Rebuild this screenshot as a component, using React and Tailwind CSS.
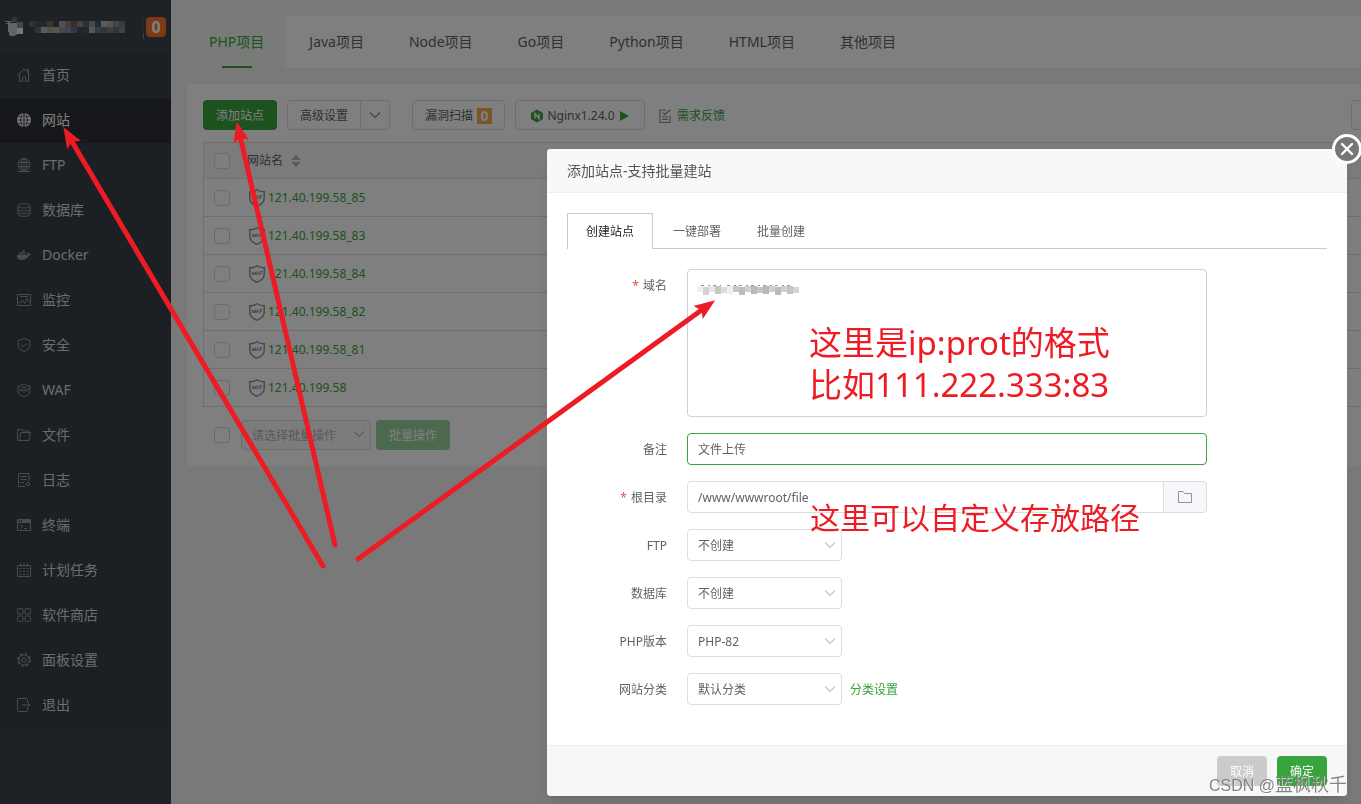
import React, { useState } from 'react';
import { FaDocker } from 'react-icons/fa';

const NavIcon = ({ children }) => (
  <svg width="14" height="14" viewBox="0 0 14 14" fill="none" stroke="currentColor" strokeWidth="1">
    {children}
  </svg>
);

const icons = {
  home: (
    <NavIcon>
      <path d="M.5 7.2 7 1l6.500 6.200M2.500 6v7.500H5.500V9h3v4.500h3V6M10 3.500V1.500h1.500V5" />
    </NavIcon>
  ),
  site: (
    <NavIcon>
      <circle cx="7" cy="7" r="6.500" fill="currentColor" />
      <g stroke="#2e2f36" strokeWidth="0.8">
        <path d="M7 .5v13M.5 7h13M1.500 3.800h11M1.500 10.200h11" />
        <ellipse cx="7" cy="7" rx="3.300" ry="6.500" />
      </g>
    </NavIcon>
  ),
  ftp: (
    <NavIcon>
      <circle cx="7" cy="6.500" r="6" />
      <ellipse cx="7" cy="6.500" rx="3" ry="6" />
      <path d="M1 4.500h12M7 .5v12M1 8.500h12M1 13.500h12" />
    </NavIcon>
  ),
  database: (
    <NavIcon>
      <ellipse cx="7" cy="2.800" rx="6" ry="2.200" />
      <path d="M1 3v8c0 1.400 2.700 2.500 6 2.500s6-1.100 6-2.500V3M1 5.600C1 7 3.700 8 7 8s6-1 6-2.400M1 8.400c0 1.400 2.700 2.400 6 2.400s6-1 6-2.400" />
    </NavIcon>
  ),
  docker: <FaDocker size={14} />,
  monitor: (
    <NavIcon>
      <path d="M.5 1.500h13v11H.5zM3 3.500h8M2 9.500h2L5.500 7l2 3.500L10 5.500l1.500 3H13" />
    </NavIcon>
  ),
  safe: (
    <NavIcon>
      <path d="M7 .7 12.800 2.500v4.300c0 3-2.300 5.300-5.800 6.600C3.500 12.100 1.200 9.800 1.200 6.800V2.500zM4.300 6.800l2 2 3.500-3.500" />
    </NavIcon>
  ),
  waf: (
    <NavIcon>
      <path d="M1.200 5V3L4 2.600 7 .8l3 1.800 2.800.4v2M1.200 9c.6 2.200 2.800 3.600 5.800 4.500 3-.9 5.200-2.300 5.800-4.500M1.200 4v6M12.800 4v6M4.500 4.200h5" />
      <path d="m3 6 .8 2.200L4.700 6l.9 2.200L6.400 6M6.800 8.500 7.800 6l1 2.500M9.800 8.500V6H11.500M9.800 7.200h1.400" strokeWidth="0.800" />
    </NavIcon>
  ),
  files: (
    <NavIcon>
      <path d="M2.500 12.500h9.500l1.500-8H3.800zM2.500 12.500h-2v-11h4l1.500 1.500h6v1.500" />
    </NavIcon>
  ),
  logs: (
    <NavIcon>
      <path d="M12 8V.5H1.500v13H8M3.500 3.500H10M3.500 6.500H10M3.500 9.500H7" />
      <circle cx="10.800" cy="11" r="1.700" />
    </NavIcon>
  ),
  terminal: (
    <NavIcon>
      <path d="M.5 1.500h13v11H.5zM.5 4.500h13M3.500 6.500 5.500 8.500 3.500 10.500M7 10.500h3" />
      <path d="M1 2.900h12" strokeWidth="2" strokeDasharray="1 1 1 1 9" />
    </NavIcon>
  ),
  cron: (
    <NavIcon>
      <path d="M.5 2.500h13v11H.5zM3.500.5v3M7 .5v3M10.500.5v3" />
      <path d="M2.500 5.500h2M6 5.500h2M9.500 5.500h2M2.500 8.500h2M6 8.500h2M9.500 8.500h2M2.500 11.500h2M6 11.500h2M9.500 11.500h2" />
    </NavIcon>
  ),
  store: (
    <NavIcon>
      <rect x=".5" y=".5" width="5.500" height="5.500" rx="1.200" />
      <rect x="8" y=".5" width="5.500" height="5.500" rx="1.200" />
      <rect x=".5" y="8" width="5.500" height="5.500" rx="1.200" />
      <rect x="8" y="8" width="5.500" height="5.500" rx="1.200" />
    </NavIcon>
  ),
  settings: (
    <NavIcon>
      <circle cx="7" cy="7" r="5.200" />
      <circle cx="7" cy="7" r="6.200" strokeWidth="1.400" strokeDasharray="2.440 2.430" />
      <circle cx="7" cy="7" r="2.300" />
    </NavIcon>
  ),
  logout: (
    <NavIcon>
      <path d="M10.500 4V1.500a1 1 0 0 0-1-1h-8a1 1 0 0 0-1 1v11a1 1 0 0 0 1 1h8a1 1 0 0 0 1-1V10M5 7h8M10.500 4.500 13 7l-2.500 2.500" />
    </NavIcon>
  ),
};

const menu = [
  { key: 'home', label: '首页' },
  { key: 'site', label: '网站' },
  { key: 'ftp', label: 'FTP' },
  { key: 'database', label: '数据库' },
  { key: 'docker', label: 'Docker' },
  { key: 'monitor', label: '监控' },
  { key: 'safe', label: '安全' },
  { key: 'waf', label: 'WAF' },
  { key: 'files', label: '文件' },
  { key: 'logs', label: '日志' },
  { key: 'terminal', label: '终端' },
  { key: 'cron', label: '计划任务' },
  { key: 'store', label: '软件商店' },
  { key: 'settings', label: '面板设置' },
  { key: 'logout', label: '退出' },
];

const projectTabs = ['PHP项目', 'Java项目', 'Node项目', 'Go项目', 'Python项目', 'HTML项目', '其他项目'];

const sites = [
  '121.40.199.58_85',
  '121.40.199.58_83',
  '121.40.199.58_84',
  '121.40.199.58_82',
  '121.40.199.58_81',
  '121.40.199.58',
];

// masked server name, two rows of 6px blocks
const maskRows = [
  ['#60616f', '#484e62', '#464f62', '#7b685c', '#3f444c', '#a6a09a', '#8a7e78', '#6e5d5d', '#8686a0', '#61625c', '#879896', '#48546c', '#bab7ac', '#a6a59a', '#868c7c', '#5f7a82'],
  [null, '#53707a', '#b6baaa', '#98a39a', '#b0ab9a', '#7c96a4', '#828ca8', '#6e6c90', '#484a58', '#4b4e55', '#b0b2a4', '#587c90', '#64686e', '#6c7f88', '#62666c', '#74848a'],
];

const inputMask = ['#f0f0f0', '#d2d2d2', '#e6e6e6', '#c8c8c8', '#dcdcdc', '#f0f0f0', '#c6c6c6', '#bdbdbd', '#d0d0d0', '#bababa', '#c4c4c4', '#b8b8b8', '#cecece', '#bcbcbc', '#d0d0d0', '#c4c4c4', '#d4d4d4'];

const Sidebar = () => (
  <aside className="w-[171px] shrink-0 bg-[#3c444d]">
    <div className="flex h-[53px] items-center px-[5px]">
      <svg width="18" height="20" viewBox="0 0 18 20" shapeRendering="crispEdges">
        <path d="M3 6h9v12h-2v1H5l-2-6z" fill="#c8c8c8" />
        <path d="M7 0h5v5H7z" fill="#6a6c70" />
        <path d="M12 5h6v6h-6z" fill="#8c8c8c" />
        <path d="M12 11h6v6h-6z" fill="#f0f0f0" />
        <path d="M0 4h7M1 7l6-3M3 9l5-3" stroke="#b4b4b4" />
      </svg>
      <svg className="ml-[6px]" width="96" height="12" shapeRendering="crispEdges">
        {maskRows.map((row, y) =>
          row.map((c, x) => c && <rect key={`${x}-${y}`} x={x * 6} y={y * 6} width="6" height="6" fill={c} />)
        )}
      </svg>
      <span className="ml-[18px] flex h-6 w-px flex-col justify-between">
        <i className="h-[6px] bg-[#62504c]" />
        <i className="h-[6px] bg-[#62504c]" />
        <i className="h-[6px] bg-[#c8643c]" />
      </span>
      <span className="ml-[2px] flex h-5 w-5 items-center justify-center rounded bg-[#f9702e] text-base font-bold leading-5 text-white">0</span>
    </div>
    <nav className="bg-[#383f47]">
      {menu.map((m) => (
        <a
          key={m.key}
          href={`#${m.key}`}
          className={`flex h-[45px] items-center gap-[11px] pb-[2px] pl-[17px] text-sm ${
            m.key === 'site' ? 'bg-[#2e3036] text-white' : 'text-[#d8d8d8]'
          }`}
        >
          <span className={m.key === 'site' ? 'text-white' : 'text-[#969696]'}>{icons[m.key]}</span>
          {m.label}
        </a>
      ))}
    </nav>
  </aside>
);

const WafShield = () => (
  <svg width="16" height="18" viewBox="0 0 16 18" fill="none" stroke="#8c8c8c" strokeWidth="1.400">
    <path d="M8 .8c2 1.500 4.500 2 7.200 2v6.400c0 3.800-3 6.500-7.200 8-4.200-1.500-7.200-4.200-7.200-8V2.800C3.500 2.800 6 2.300 8 .8z" />
    <path d="M3 6.500 4 10l1-2.500L6 10l.8-3.500M7.200 10l1.300-3.500L9.800 10M11 10V6.500h2.200M11 8.200h1.800" strokeWidth="0.900" />
  </svg>
);

const Check = ({ label }) => (
  <input
    type="checkbox"
    aria-label={label}
    className="block h-4 w-4 appearance-none rounded-sm border border-[#d4d5da] bg-white checked:bg-[#38a43c]"
  />
);

const Chevron = ({ className }) => (
  <svg className={className} width="12" height="12" viewBox="0 0 12 12" fill="none" stroke="currentColor" strokeWidth="1.200">
    <path d="m1 3.500 5 5 5-5" />
  </svg>
);

const Toolbar = () => (
  <div className="flex h-[30px] items-center">
    <button className="h-[30px] w-[74px] rounded bg-[#38a43c] pt-[2px] text-white">添加站点</button>
    <div className="ml-[10px] flex h-[30px] rounded border border-[#d8dae2]">
      <button className="w-[72px] pt-[2px]">高级设置</button>
      <button aria-label="更多" className="flex w-[29px] items-center justify-center border-l border-[#d8dae2] text-[#888]">
        <Chevron />
      </button>
    </div>
    <button className="ml-[22px] flex h-[30px] w-[93px] items-center justify-center gap-1 rounded border border-[#d8dae2] pt-[2px]">
      漏洞扫描
      <span className="flex h-4 w-[15px] items-center justify-center bg-[#f0ad4e] text-sm font-bold leading-4 text-white">0</span>
    </button>
    <button className="ml-[10px] flex h-[30px] w-[130px] items-center justify-center rounded border border-[#d8dae2] pt-[2px]">
      <svg width="12" height="14" viewBox="0 0 12 14">
        <path d="M6 .5 12 4v6l-6 3.500L0 10V4z" fill="#38a43c" />
        <path d="M4 9.500v-5l4 5v-5" fill="none" stroke="#fff" strokeWidth="1.400" />
      </svg>
      <span className="ml-1">Nginx1.24.0</span>
      <svg className="ml-[5px]" width="9" height="10" viewBox="0 0 9 10">
        <path d="M0 0v10l9-5z" fill="#38a43c" />
      </svg>
    </button>
    <a href="#feedback" className="ml-[14px] flex items-center gap-[5px] pt-[2px] text-[#38a43c]">
      <svg width="13" height="14" viewBox="0 0 13 14" fill="none" stroke="#888" strokeWidth="1.100">
        <path d="M7 1H1v12.500h10V6.500M3 10.500h6M3 8h6M5 6 11.500.8M4 3.500l2 2.500" />
      </svg>
      需求反馈
    </a>
    <button aria-label="分类" className="ml-auto h-[30px] w-[90px] rounded border border-[#d8dae2]" />
  </div>
);

const SiteTable = () => (
  <div className="mt-3 border-l border-t border-[#dcdcdc]">
    <table className="w-full border-separate border-spacing-0 text-left">
      <thead className="bg-[#f6f6f6]">
        <tr>
          <th className="h-9 w-[43px] border-b border-[#e6e6e6] pl-[10px]"><Check label="全选" /></th>
          <th className="h-9 border-b border-[#e6e6e6] font-normal">
            <span className="flex items-center gap-2">
              网站名
              <svg width="10" height="12" viewBox="0 0 10 12" fill="#b4b4b4">
                <path d="M0 5h10L5 0zM0 7h10l-5 5z" />
              </svg>
            </span>
          </th>
        </tr>
      </thead>
      <tbody>
        {sites.map((s) => (
          <tr key={s}>
            <td className="h-[38px] border-b border-[#dcdcdc] pl-[10px]"><Check label={s} /></td>
            <td className="h-[38px] border-b border-[#dcdcdc]">
              <a href={`#${s}`} className="flex items-center gap-[3px] pl-[2px] text-[#38a43c]">
                <WafShield />
                {s}
              </a>
            </td>
          </tr>
        ))}
      </tbody>
    </table>
  </div>
);

const Field = ({ id, label, required, top, children }) => (
  <div className={`flex ${top ? 'items-start' : 'items-center'}`}>
    <label htmlFor={id} className="h-8 w-[100px] shrink-0 pt-px text-right leading-8">
      {required && <span className="mr-1 text-[#f04848]">*</span>}
      {label}
    </label>
    <div className="relative ml-5 flex items-center gap-2">{children}</div>
  </div>
);

const Select = ({ id, value }) => (
  <div className="relative">
    <select id={id} defaultValue={value} className="h-8 w-[155px] appearance-none rounded border border-[#dcdce6] bg-white px-[10px] pt-[2px]">
      <option>{value}</option>
    </select>
    <Chevron className="pointer-events-none absolute right-[6px] top-[10px] text-[#c0c4cc]" />
  </div>
);

const AddSiteDialog = () => {
  const [remark, setRemark] = useState('文件上传');
  const [root, setRoot] = useState('/www/wwwroot/file');

  return (
    <div role="dialog" aria-label="添加站点" className="relative w-[800px] rounded bg-white shadow-lg">
      <button
        aria-label="关闭"
        className="absolute -right-[15px] -top-[15px] flex h-[30px] w-[30px] items-center justify-center rounded-full border-[3px] border-white bg-[#777]"
      >
        <svg width="14" height="14" viewBox="0 0 14 14" stroke="#fff" strokeWidth="2.400" strokeLinecap="round">
          <path d="m2 2 10 10M12 2 2 12" />
        </svg>
      </button>

      <h2 className="h-11 rounded-t border-b border-[#eee] bg-[#f8f8f8] px-5 text-sm leading-[43px] text-[#555]">添加站点-支持批量建站</h2>

      <div className="px-5 pb-10 pt-5">
        <div className="flex h-9 border-b border-[#cbc8da]">
          <button className="h-9 w-[86px] border border-b-0 border-[#cbc8da] bg-white pt-px text-[#222]">创建站点</button>
          <button className="w-[88px] pt-[2px]">一键部署</button>
          <button className="w-20 pt-[2px]">批量创建</button>
        </div>

        <form className="mt-5 flex flex-col gap-4">
          <Field id="domain" label="域名" required top>
            <textarea id="domain" className="block h-[148px] w-[520px] resize-none rounded border border-[#d0d0d4] p-[10px]" />
            <svg className="pointer-events-none absolute left-[10px] top-[16px]" width="102" height="10" shapeRendering="crispEdges">
              {inputMask.map((c, i) => (
                <rect key={i} x={i * 6} y={i % 3 === 1 ? 2 : 1} width="6" height={i % 2 ? 8 : 6} fill={c} />
              ))}
              <path d="M4 0.500h20M30 0.500h66" stroke="#999" strokeDasharray="3 4 2 3" />
            </svg>
            <p className="pointer-events-none absolute left-[122px] top-[53px] whitespace-nowrap text-[33px] leading-[42px] text-[#ed1c24]">
              这里是ip:prot的格式
              <br />
              比如111.222.333:83
            </p>
          </Field>
          <Field id="remark" label="备注">
            <input
              id="remark"
              value={remark}
              onChange={(e) => setRemark(e.target.value)}
              className="h-8 w-[520px] rounded border border-[#38a43c] px-[10px] outline-none"
            />
          </Field>
          <Field id="root" label="根目录" required>
            <div className="flex">
              <input
                id="root"
                value={root}
                onChange={(e) => setRoot(e.target.value)}
                className="h-8 w-[477px] rounded-l border border-[#dcdce6] px-[10px]"
              />
              <button type="button" aria-label="选择目录" className="flex h-8 w-[43px] items-center justify-center rounded-r border border-l-0 border-[#dcdce6] bg-[#f5f7fa]">
                <svg width="14" height="12" viewBox="0 0 14 12" fill="none" stroke="#909399">
                  <path d="M.5.5h4.500l1.500 2h7v9H.5z" />
                </svg>
              </button>
            </div>
            <p className="pointer-events-none absolute left-[123px] top-4 z-10 whitespace-nowrap text-[30px] leading-[42px] text-[#ed1c24]">
              这里可以自定义存放路径
            </p>
          </Field>
          <Field id="ftp" label="FTP"><Select id="ftp" value="不创建" /></Field>
          <Field id="db" label="数据库"><Select id="db" value="不创建" /></Field>
          <Field id="php" label="PHP版本"><Select id="php" value="PHP-82" /></Field>
          <Field id="type" label="网站分类">
            <Select id="type" value="默认分类" />
            <a href="#type" className="pt-[2px] text-[#38a43c]">分类设置</a>
          </Field>
        </form>
      </div>

      <div className="flex justify-end gap-[10px] rounded-b border-t border-[#edf0ef] bg-[#f6f8f8] px-5 py-[10px] text-white">
        <button className="h-[30px] w-[50px] rounded bg-[#cbcbcb] pt-[2px]">取消</button>
        <button className="h-[30px] w-[50px] rounded bg-[#38a43c] pt-[2px]">确定</button>
      </div>
    </div>
  );
};

const Arrows = () => (
  <svg className="pointer-events-none fixed left-0 top-0 z-30" width="760" height="600" fill="none" stroke="#ed1c24" strokeWidth="5" strokeLinecap="round">
    <defs>
      <marker id="head" markerUnits="userSpaceOnUse" markerWidth="22" markerHeight="18" refX="6" refY="9" orient="auto">
        <path d="M0 1 21 9 0 17 4 9z" fill="#ed1c24" stroke="none" />
      </marker>
    </defs>
    <path d="M323 566 71 140" markerEnd="url(#head)" />
    <path d="M335 545 240 136" markerEnd="url(#head)" />
    <path d="M358 559 703 309" markerEnd="url(#head)" />
  </svg>
);

const App = () => (
  <div className="flex h-screen overflow-hidden bg-[#f2f2f3] font-['Noto_Sans','Noto_Sans_CJK_SC',sans-serif] text-xs text-[#606266]">
    <Sidebar />
    <main className="flex min-w-[1302px] flex-1 flex-col gap-4 p-4">
      <nav className="flex h-[52px] shrink-0 gap-px rounded bg-white text-sm">
        {projectTabs.map((t, i) => (
          <a
            key={t}
            href={`#${t}`}
            className={`relative flex items-center px-[22px] ${i === 0 ? 'rounded-l bg-[#f0f6ee] text-[#38a43c]' : ''}`}
          >
            {t}
            {i === 0 && <span className="absolute bottom-0 left-[35px] h-[2px] w-[30px] bg-[#38a43c]" />}
          </a>
        ))}
      </nav>

      <section className="bg-white p-4">
        <Toolbar />
        <SiteTable />
        <div className="mt-[13px] flex items-center pl-[11px]">
          <Check label="选择全部" />
          <div className="relative ml-[11px]">
            <select aria-label="批量操作" disabled className="block h-[30px] w-[130px] appearance-none rounded border border-[#d8d8d8] bg-[#f8f8f8] px-[10px] pt-[2px] text-[#b4b4b8]">
              <option>请选择批量操作</option>
            </select>
            <Chevron className="pointer-events-none absolute right-[6px] top-2 text-[#b4b4b8]" />
          </div>
          <button className="ml-[5px] h-[30px] w-[74px] rounded bg-[#98d19c] pt-[2px] text-white">批量操作</button>
        </div>
      </section>
    </main>

    {/* Mask and dialog */}
    <div className="fixed inset-0 z-20 flex items-end justify-end bg-black/50 pb-2 pr-[14px]">
      <AddSiteDialog />
    </div>

    <Arrows />
    <span className="pointer-events-none fixed bottom-[6px] right-[14px] z-40 text-lg leading-6 text-[#777]/90 [text-shadow:1px_1px_0_rgba(255,255,255,0.6)] font-['Liberation_Sans','Noto_Sans_CJK_SC',sans-serif]">
      <span className="text-base">CSDN @</span>蓝枫秋千
    </span>
  </div>
);

export default App;
